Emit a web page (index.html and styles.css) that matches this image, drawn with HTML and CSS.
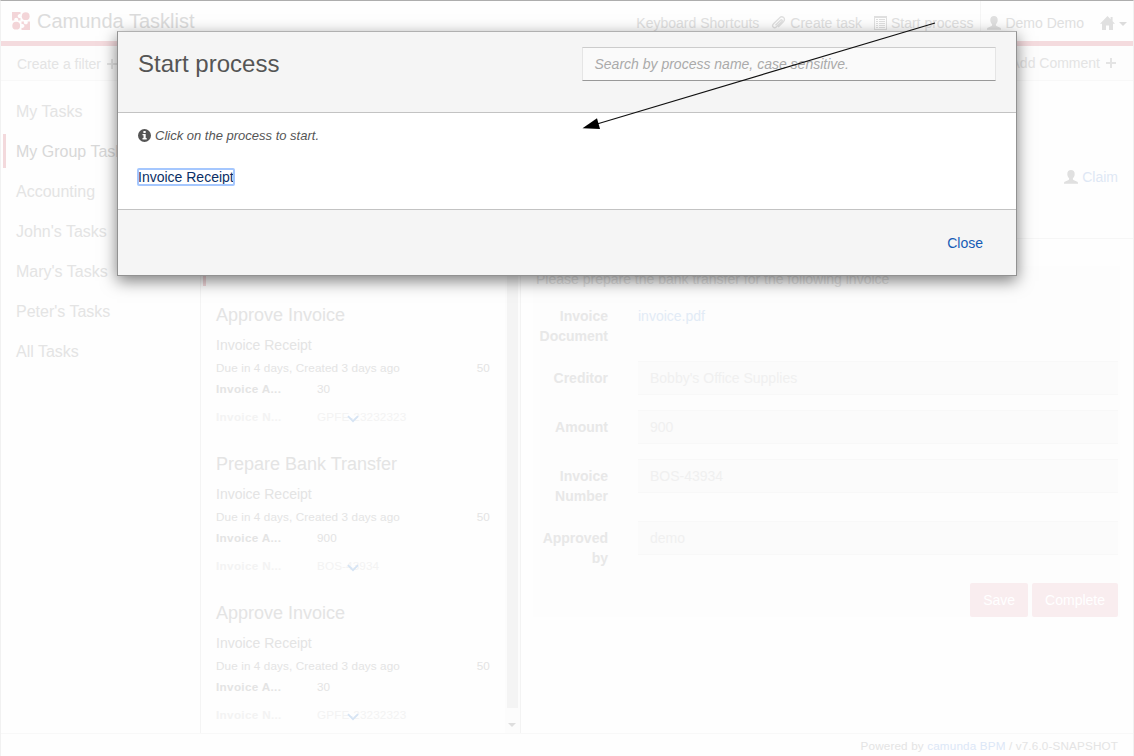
FILE: index.html
```html
<!DOCTYPE html>
<html lang="en">
<head>
<meta charset="utf-8">
<title>Camunda Tasklist</title>
<link rel="stylesheet" href="styles.css">
</head>
<body>
<svg class="defs" width="0" height="0">
  <symbol id="user" viewBox="0 0 14 14"><path d="M7 0C4.700 0 3.300 1.500 3.300 3.900c0 2 .8 3.500 1.800 4.300v1.100c0 .5-.4.8-1 1L1.200 11.400C.4 11.700 0 12.200 0 13v.8h14V13c0-.8-.4-1.300-1.200-1.600L9.900 10.300c-.6-.2-1-.5-1-1V8.200c1-.8 1.800-2.300 1.800-4.300C10.700 1.500 9.300 0 7 0z"/></symbol>
  <symbol id="plus" viewBox="0 0 10 10"><path d="M4 0h2v4h4v2H6v4H4V6H0V4h4z"/></symbol>
  <symbol id="chevron" viewBox="0 0 12 8"><path d="M1 1.200l5 5 5-5" fill="none" stroke="currentColor" stroke-width="1.800"/></symbol>
</svg>
<div class="app">
  <header class="header">
    <div class="brand">
      <svg class="logo" width="18" height="18" viewBox="0 0 18 18">
        <path d="M0 0h8.500v2.300a2 2 0 1 0 0 3.600V8.500H6a2 2 0 1 0-3.600 0H0z"/>
        <circle cx="13.700" cy="4.200" r="3.900"/><circle cx="4.200" cy="13.700" r="3.900"/>
        <path d="M9.500 9.500H12a2 2 0 1 0 3.600 0H18V18H9.500v-2.300a2 2 0 1 0 0-3.600z"/>
      </svg>
      <span>Camunda Tasklist</span>
    </div>
    <nav class="nav">
      <a class="nav-item">Keyboard Shortcuts</a>
      <a class="nav-item"><svg width="15" height="14" viewBox="0 0 15 14"><path d="M4.500 9.200l5-5c1.100-1.100 2.300 0 1.300 1.200l-5.600 5.500c-2 2-4.900-.6-2.900-2.800l6.200-6.200c2.800-2.700 6.700.6 4.100 3.500l-5.400 5.500" fill="none" stroke="currentColor" stroke-width="1.400"/></svg>Create task</a>
      <a class="nav-item"><svg width="13" height="14" viewBox="0 0 13 14"><path fill-rule="evenodd" d="M0 0h13v14H0zM1 2v11h11V2zM2 3h2v1H2zM5 3h6v1H5zM2 5h2v1H2zM5 5h6v1H5zM2 7h2v1H2zM5 7h6v1H5zM2 9h2v1H2zM5 9h6v1H5zM2 11h2v1H2zM5 11h6v1H5z"/></svg>Start process</a>
      <a class="nav-item nav-user"><svg width="14" height="14"><use href="#user"/></svg>Demo Demo</a>
      <a class="nav-item nav-home"><svg width="15" height="14" viewBox="0 0 15 14"><path d="M7.500 0L0 7.800h2V14h4V9.500h3V14h4V7.800h2L12.600 5.300V1h-2v2.200z"/></svg><i class="caret"></i></a>
    </nav>
  </header>
  <main class="columns">
    <aside class="filters">
      <div class="toolbar create">Create a filter <svg width="10" height="10"><use href="#plus"/></svg></div>
      <ul class="filter-list">
        <li>My Tasks</li>
        <li class="active">My Group Tasks</li>
        <li>Accounting</li>
        <li>John's Tasks</li>
        <li>Mary's Tasks</li>
        <li>Peter's Tasks</li>
        <li>All Tasks</li>
      </ul>
    </aside>
    <section class="tasks">
      <div class="task-list">
        <div class="task selected"></div>
        <article class="task">
          <h4>Approve Invoice</h4><div class="process">Invoice Receipt</div>
          <div class="meta"><span>Due in 4 days, Created 3 days ago</span><span>50</span></div>
          <div class="var"><b>Invoice A...</b><span>30</span></div>
          <div class="var faded"><b>Invoice N...</b><span>GPFE-23232323</span><svg class="more" width="12" height="8"><use href="#chevron"/></svg></div>
        </article>
        <article class="task">
          <h4>Prepare Bank Transfer</h4><div class="process">Invoice Receipt</div>
          <div class="meta"><span>Due in 4 days, Created 3 days ago</span><span>50</span></div>
          <div class="var"><b>Invoice A...</b><span>900</span></div>
          <div class="var faded"><b>Invoice N...</b><span>BOS-43934</span><svg class="more" width="12" height="8"><use href="#chevron"/></svg></div>
        </article>
        <article class="task">
          <h4>Approve Invoice</h4><div class="process">Invoice Receipt</div>
          <div class="meta"><span>Due in 4 days, Created 3 days ago</span><span>50</span></div>
          <div class="var"><b>Invoice A...</b><span>30</span></div>
          <div class="var faded"><b>Invoice N...</b><span>GPFE-23232323</span><svg class="more" width="12" height="8"><use href="#chevron"/></svg></div>
        </article>
      </div>
      <div class="scrollbar"><div class="thumb"></div><div class="scroll-btn"><i></i></div></div>
    </section>
    <section class="detail">
      <div class="toolbar end">Add Comment <svg width="10" height="10"><use href="#plus"/></svg></div>
      <div class="summary"><a class="claim"><svg width="14" height="14"><use href="#user"/></svg>Claim</a></div>
      <form class="form">
        <p>Please prepare the bank transfer for the following invoice</p>
        <div class="group"><label>Invoice Document</label><a class="file">invoice.pdf</a></div>
        <div class="group"><label>Creditor</label><div class="field">Bobby's Office Supplies</div></div>
        <div class="group"><label>Amount</label><div class="field">900</div></div>
        <div class="group"><label>Invoice Number</label><div class="field">BOS-43934</div></div>
        <div class="group"><label>Approved by</label><div class="field">demo</div></div>
        <div class="actions"><span class="btn">Save</span><span class="btn">Complete</span></div>
      </form>
    </section>
  </main>
  <footer class="footer">Powered by <a>camunda BPM</a> / v7.6.0-SNAPSHOT</footer>
</div>
<div class="modal">
  <div class="modal-header"><h3>Start process</h3><div class="search">Search by process name, case sensitive.</div></div>
  <div class="modal-body">
    <div class="hint"><svg width="13" height="13" viewBox="0 0 13 13"><path fill-rule="evenodd" d="M6.500 0a6.500 6.500 0 1 0 0 13a6.500 6.500 0 1 0 0-13zM5.400 2h2.300v1.900H5.400zM4.500 5h3.200v4h1v1.400H4.500V9h1V6.300h-1z"/></svg><span>Click on the process to start.</span></div>
    <a class="process-link">Invoice Receipt</a>
  </div>
  <div class="modal-footer"><a>Close</a></div>
</div>
<svg class="pointer" width="1134" height="756" viewBox="0 0 1134 756"><path d="M935 23L597 124" stroke="#111" stroke-width="1.100" fill="none"/><path d="M582.500 128.300L597 118.300L600 129z"/></svg>
</body>
</html>
```
FILE: styles.css
```css
* { box-sizing: border-box; }
body { margin: 0; width: 1134px; height: 756px; overflow: hidden; position: relative; background: #fff; font: 14px/20px "Liberation Sans", Arial, sans-serif; color: #e4e4e4; }
svg { fill: currentColor; flex: none; }
.defs { position: absolute; }
.app { height: 756px; display: flex; flex-direction: column; border: solid #f1f1f1; border-width: 1px 1px 0; border-top-color: #adadad; background: #fefefe; }
.header { height: 45px; flex: none; display: flex; justify-content: space-between; border-bottom: 5px solid #f4dbde; }
.brand { display: flex; align-items: center; gap: 7px; padding-left: 11px; font-size: 20px; color: #dcdcdc; }
.logo { color: #f3d5d8; }
.nav { display: flex; padding-right: 6px; color: #e0e0e0; }
.nav-item { display: flex; align-items: center; gap: 4px; padding: 4px 6px 0; white-space: nowrap; }
.nav-user { border-left: 1px solid #f5f5f5; margin-left: 1px; }
.nav-home { padding: 3px 0 0 10px; }
.caret { border: 4px solid transparent; border-top-color: #dcdcdc; border-bottom: 0; margin-top: 3px; }
.columns { height: 687px; flex: none; display: flex; }
.filters { width: 200px; border-right: 1px solid #f4f4f4; }
.toolbar { height: 35px; display: flex; align-items: center; gap: 6px; padding: 0 15px; border-bottom: 1px solid #f8f8f8; background: #fdfdfd; white-space: nowrap; }
.toolbar.create { padding: 1px 15px 0 16px; }
.toolbar.end { justify-content: flex-end; padding-bottom: 1px; padding-right: 17px; }
.filter-list { list-style: none; margin: 13px 0 0; padding: 0 2px; font-size: 16px; }
.filter-list li { height: 34px; line-height: 35px; margin-bottom: 6px; padding-left: 10px; border-left: 3px solid transparent; white-space: nowrap; }
.filter-list .active { border-color: #f3d9dc; color: #d8d8d8; }
.tasks { width: 320px; display: flex; border-right: 1px solid #f3f3f3; overflow: hidden; }
.task-list { flex: 1; padding: 92px 0 0 2px; overflow: hidden; }
.task { height: 149px; padding: 18px 15px 0 13px; }
.task.selected { height: 148px; margin-bottom: 1px; border-left: 3px solid #f3d9dc; }
.task h4 { margin: 0 0 10px; font-size: 18px; font-weight: 400; }
.process { margin-bottom: 3px; }
.meta, .var { font-size: 11.7px; letter-spacing: .12px; }
.meta { display: flex; justify-content: space-between; margin-bottom: 1px; }
.var { display: grid; grid-template-columns: 101px 1fr; }
.var b { letter-spacing: .33px; }
.faded { position: relative; margin-top: 8px; height: 14px; color: #f3f3f3; }
.more { position: absolute; left: 131px; top: 8px; color: #d6e4f4; }
.scrollbar { width: 15px; display: flex; flex-direction: column; background: #fcfcfc; }
.thumb { width: 11px; height: 662px; margin-left: 2px; background: #f4f4f4; }
.scroll-btn { flex: 1; padding: 15px 0 0 3px; }
.scroll-btn i { display: block; width: 0; border: 4px solid transparent; border-top-color: #dedede; border-bottom: 0; }
.detail { flex: 1; }
.summary { height: 158px; padding: 86px 15px 0; border-bottom: 1px solid #f6f6f6; display: flex; justify-content: flex-end; align-items: flex-start; }
.claim { display: flex; align-items: center; gap: 4px; color: #dfe8f5; }
.claim svg { color: #e0e0e0; margin-bottom: 1px; }
.form { margin: 27px 13px 0 12px; padding: 3px 2px 0 3px; background: #fdfdfd; }
.form p { margin: 0 0 10px; }
.group { display: flex; min-height: 34px; margin-bottom: 15px; gap: 30px; }
.group label { width: 72px; padding-top: 7px; font-weight: 700; text-align: right; color: #e8e8e8; }
.file { padding-top: 7px; color: #e2ebf6; }
.field { flex: 1; height: 34px; padding: 6px 12px; background: #fbfbfb; border: solid #f8f8f8; border-width: 1px 0; color: #f0f0f0; }
.actions { display: flex; justify-content: flex-end; gap: 4px; }
.btn { height: 34px; padding: 7px 13px; border-radius: 2px; background: #f9edef; color: #fff; }
.footer { flex: 1; border-top: 1px solid #f8f8f8; text-align: right; padding: 2px 15px 0; font-size: 11.7px; letter-spacing: .15px; }
.footer a { color: #dce7f7; }
.modal { position: absolute; left: 117px; top: 31px; width: 900px; height: 245px; border: 1px solid #929292; border-top-color: #b0b0b0; background: #fff; box-shadow: 0 5px 15px rgba(0,0,0,.5); color: #555; display: flex; flex-direction: column; }
.modal-header { height: 81px; padding: 15px 20px; display: flex; justify-content: space-between; background: #f5f5f5; border-bottom: 1px solid #c3c3c3; }
.modal h3 { margin: 4px 0 0; font-size: 24px; line-height: 26px; font-weight: 400; }
.search { width: 414px; height: 34px; padding: 6px 11.5px; border: 1px solid #e5e5e5; border-top-color: #ccc; border-bottom-color: #999; background: #fafafa; font-style: italic; color: #aaa; }
.modal-body { height: 96px; padding: 12px 20px; }
.hint { display: flex; align-items: center; gap: 4px; font-size: 13px; font-style: italic; margin-bottom: 21px; }
.hint span { padding-top: 1px; }
.process-link { display: inline-block; line-height: 16px; color: #0b2f66; border-radius: 1px; outline: 2px solid #a5c7fe; outline-offset: -1px; }
.modal-footer { height: 66px; margin-top: 1px; padding: 22px 33px; text-align: right; background: #f5f5f5; border-top: 1px solid #c3c3c3; }
.modal-footer { flex: 1; padding-top: 23px; }
.modal-footer a { color: #155cb5; }
.pointer { position: absolute; left: 0; top: 0; fill: #000; pointer-events: none; }
```
